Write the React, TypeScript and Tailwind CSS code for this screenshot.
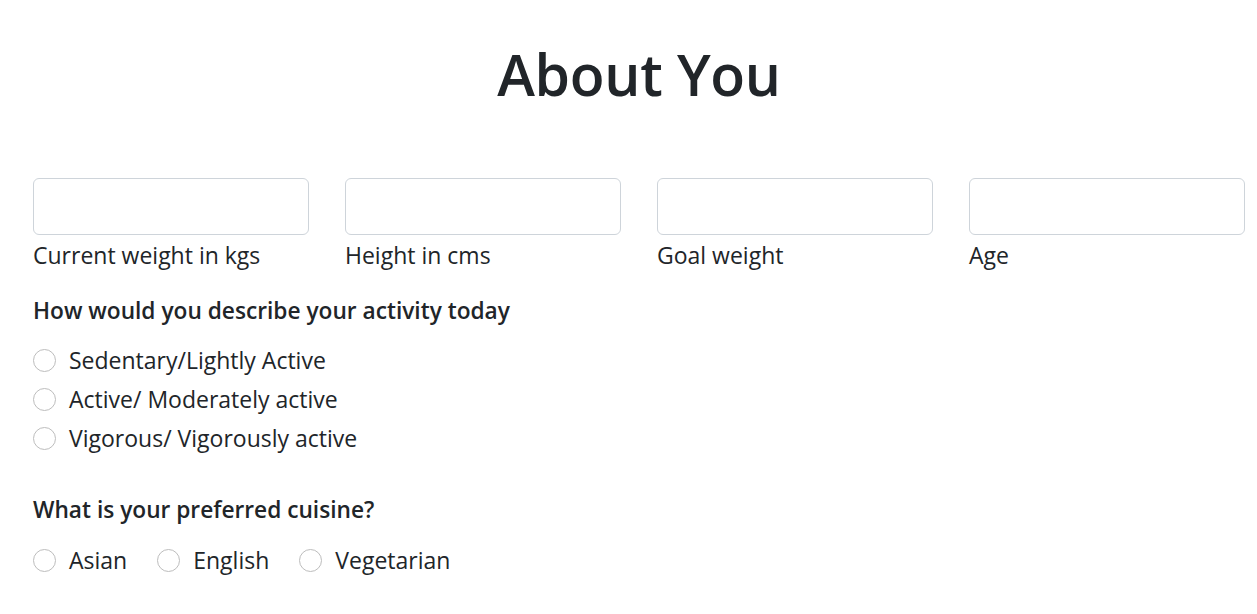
import React from 'react';

const font = { fontFamily: '"Open Sans", "Noto Sans", sans-serif' };

const fields = ['Current weight in kgs', 'Height in cms', 'Goal weight', 'Age'];
const activities = ['Sedentary/Lightly Active', 'Active/ Moderately active', 'Vigorous/ Vigorously active'];
const cuisines = ['Asian', 'English', 'Vegetarian'];

function Radio({ name, label }: { name: string; label: string }) {
  return (
    <label className="flex items-center h-[39px] cursor-pointer">
      <input
        type="radio"
        name={name}
        className="appearance-none w-[23px] h-[23px] rounded-full border border-[#bdbdbd] bg-white shrink-0 checked:border-[6px] checked:border-[#0d6efd]"
      />
      <span className="ml-[13px] text-[23px] text-[#212529]">{label}</span>
    </label>
  );
}

export default function App() {
  return (
    <div className="min-h-screen bg-white text-[#212529] pl-[33px] pr-[12px]" style={font}>
      <h1 className="text-center text-[57px] font-semibold leading-[77px] pt-[36px] tracking-[-0.3px]">About You</h1>

      <div className="grid grid-cols-4 gap-x-[36px] mt-[65px]">
        {fields.map((f) => (
          <div key={f} className="flex flex-col">
            <input
              type="text"
              className="h-[57px] w-full rounded-[6px] border border-[#ced4da] bg-white px-3 outline-none"
            />
            <span className="text-[23px] leading-[36px] mt-[2px]">{f}</span>
          </div>
        ))}
      </div>

      <h2 className="text-[22.7px] font-semibold leading-[32px] mt-[22px]">How would you describe your activity today</h2>
      <div className="flex flex-col mt-[14px]">
        {activities.map((a) => (
          <Radio key={a} name="activity" label={a} />
        ))}
      </div>

      <h2 className="text-[22.7px] font-semibold leading-[32px] mt-[36px]">What is your preferred cuisine?</h2>
      <div className="flex gap-x-[30px] mt-[15px]">
        {cuisines.map((c) => (
          <Radio key={c} name="cuisine" label={c} />
        ))}
      </div>
    </div>
  );
}
